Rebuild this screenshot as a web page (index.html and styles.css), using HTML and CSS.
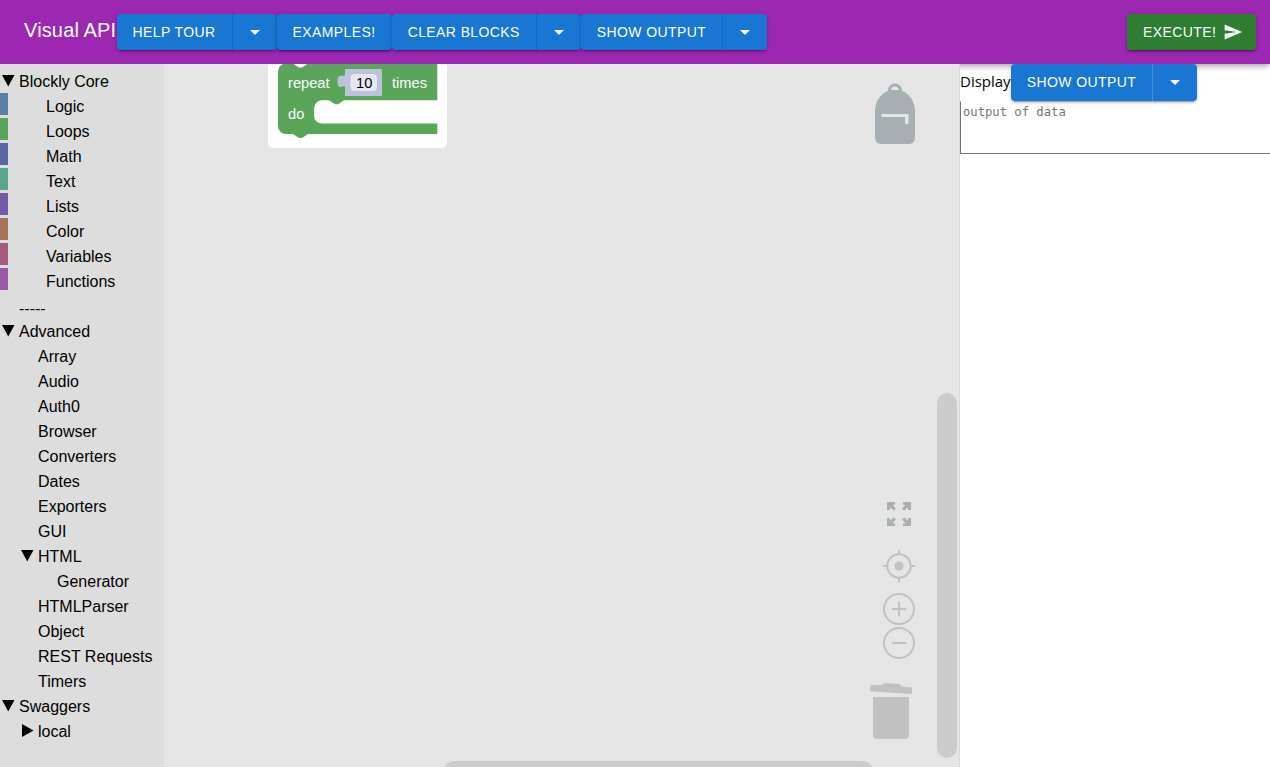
FILE: index.html
```html
<!DOCTYPE html>
<html lang="en">
<head>
<meta charset="utf-8">
<title>Visual API</title>
<link rel="stylesheet" href="styles.css">
</head>
<body>
<header class="appbar">
  <h1 class="brand">Visual API</h1>
  <div class="group"><button class="btn help">HELP TOUR</button><button class="btn drop" aria-label="More"><svg class="caret" viewBox="0 0 24 24"><path d="m7 10 5 5 5-5z"/></svg></button></div>
  <button class="btn examples">EXAMPLES!</button>
  <div class="group"><button class="btn clear">CLEAR BLOCKS</button><button class="btn drop" aria-label="More"><svg class="caret" viewBox="0 0 24 24"><path d="m7 10 5 5 5-5z"/></svg></button></div>
  <div class="group"><button class="btn show">SHOW OUTPUT</button><button class="btn drop" aria-label="More"><svg class="caret" viewBox="0 0 24 24"><path d="m7 10 5 5 5-5z"/></svg></button></div>
  <button class="btn execute">EXECUTE!<svg class="send" viewBox="0 0 24 24"><path d="M2.01 21 23 12 2.01 3 2 10l15 2-15 2z"/></svg></button>
</header>
<main class="main">
  <nav class="toolbox">
    <div class="row"><i class="arrow down"></i>Blockly Core</div>
    <div class="row core logic">Logic</div>
    <div class="row core loops">Loops</div>
    <div class="row core math">Math</div>
    <div class="row core text">Text</div>
    <div class="row core lists">Lists</div>
    <div class="row core color">Color</div>
    <div class="row core variables">Variables</div>
    <div class="row core functions">Functions</div>
    <div class="row divider">-----</div>
    <div class="row"><i class="arrow down"></i>Advanced</div>
    <div class="row sub">Array</div>
    <div class="row sub">Audio</div>
    <div class="row sub">Auth0</div>
    <div class="row sub">Browser</div>
    <div class="row sub">Converters</div>
    <div class="row sub">Dates</div>
    <div class="row sub">Exporters</div>
    <div class="row sub">GUI</div>
    <div class="row sub"><i class="arrow down"></i>HTML</div>
    <div class="row leaf">Generator</div>
    <div class="row sub">HTMLParser</div>
    <div class="row sub">Object</div>
    <div class="row sub">REST Requests</div>
    <div class="row sub">Timers</div>
    <div class="row"><i class="arrow down"></i>Swaggers</div>
    <div class="row sub"><i class="arrow right"></i>local</div>
  </nav>
  <svg class="workspace" viewBox="164 64 796 703">
    <!-- loop block -->
    <rect class="paper" x="268" y="40" width="179" height="108" rx="5"/>
    <path class="loop" d="M278 71.5a8 8 0 0 1 8-8h7l6 4h3l6-4h129.3v36.8H344l-6 4h-3l-6-4h-7a8 8 0 0 0-8 8v7.2a8 8 0 0 0 8 8h115.3V134H308l-6 4h-3l-6-4h-7a8 8 0 0 1-8-8z"/>
    <path class="number" d="M345 69h37v27h-37v-8c0-5-7.500 4-7.500-6.500s7.500-2.500 7.500-7.500z"/>
    <rect class="field" x="350.500" y="74" width="26.500" height="17" rx="4"/>
    <text class="label" x="288" y="88">repeat</text>
    <text class="label value" x="356" y="88">10</text>
    <text class="label" x="392" y="88">times</text>
    <text class="label" x="288" y="119">do</text>
    <!-- backpack -->
    <g class="slate">
      <path d="M875 111c0-11 8-20 16-21h8c8 1 16 10 16 21v27a6 6 0 0 1-6 6h-28a6 6 0 0 1-6-6z"/>
      <path class="handle" d="M889.500 92v-1.500a5.500 5.500 0 0 1 11 0V92"/>
      <path class="zipper" d="M881.500 114h27v9a1 1 0 0 1-1 1h-1.500a1 1 0 0 1-1-1v-6h-23.500z"/>
    </g>
    <!-- zoom to fit -->
    <g class="slate">
      <path d="M887 502h8v2.500l-2.500.5 3.500 3.500-2.200 2.200-3.600-3.500-.4 2.800H887z"/>
      <path d="M911 502h-8v2.500l2.500.5-3.500 3.500 2.200 2.200 3.600-3.500.4 2.800h2.800z"/>
      <path d="M887 526h8v-2.500l-2.500-.5 3.500-3.500-2.200-2.200-3.600 3.500-.4-2.800H887z"/>
      <path d="M911 526h-8v-2.500l2.500-.5-3.500-3.500 2.200-2.200 3.600 3.500.4-2.800h2.800z"/>
    </g>
    <!-- centre and zoom controls -->
    <g class="outline">
      <circle cx="899" cy="566" r="11.700"/>
      <path d="M899 550v4m0 24v4M883 566h4m24 0h4"/>
      <circle cx="899" cy="609" r="15"/>
      <path d="M891.800 609h14.400M899 601.800v14.400"/>
      <circle cx="899" cy="643" r="15"/>
      <path d="M891.800 643h14.400"/>
    </g>
    <circle class="grey" cx="899" cy="566" r="4.500"/>
    <!-- trash can -->
    <path class="grey" d="M873 697h36v38a4 4 0 0 1-4 4h-28a4 4 0 0 1-4-4zM870.500 684.800l11.200.5 2.700-2.400 15.200 1 1.900 2.700 10.800.8-.5 6.600-41.800-2.800z"/>
    <rect class="scroll" x="937" y="393" width="20" height="365" rx="10"/>
    <rect class="scroll" x="444" y="761" width="429" height="20" rx="10"/>
    <path class="edge" d="M959.500 64v703"/>
  </svg>
  <aside class="output">
    <div class="display">
      <span class="caption">Display</span>
      <div class="group"><button class="btn show">SHOW OUTPUT</button><button class="btn drop" aria-label="More"><svg class="caret" viewBox="0 0 24 24"><path d="m7 10 5 5 5-5z"/></svg></button></div>
    </div>
    <textarea class="data" placeholder="output of data"></textarea>
  </aside>
</main>
</body>
</html>
```
FILE: styles.css
```css
* { box-sizing: border-box; }
body {
  margin: 0;
  height: 767px;
  overflow: hidden;
  background: #fff;
  color: #000;
  font-family: "Liberation Sans", Arial, sans-serif;
}
.appbar {
  position: relative;
  z-index: 1;
  display: flex;
  align-items: center;
  height: 64px;
  padding: 0 14px 0 24px;
  background: #9c27b0;
  box-shadow: 0 2px 4px -1px #0003, 0 4px 5px #0002, 0 1px 10px #0001;
}
.brand {
  width: 92.5px;
  margin: 0;
  padding-bottom: 4px;
  color: #fff;
  font-size: 20px;
  font-weight: 400;
  letter-spacing: 0.15px;
  line-height: 32px;
  white-space: nowrap;
}
.group {
  display: flex;
  border-radius: 4px;
  box-shadow: 0 3px 1px -2px #0003, 0 2px 2px #0002, 0 1px 5px #0002;
}
.btn {
  display: flex;
  align-items: center;
  justify-content: center;
  height: 36.5px;
  padding: 0 0 1px;
  border: 0;
  border-radius: 4px;
  background: #1976d2;
  color: #fff;
  font: 14px "Liberation Sans", Arial, sans-serif;
  letter-spacing: 0.4px;
  white-space: nowrap;
}
.group .btn:first-child {
  border-right: 1px solid #1565c0;
  border-radius: 4px 0 0 4px;
}
.group .drop {
  width: 44px;
  padding: 0;
  border-radius: 0 4px 4px 0;
}
.help { width: 116px; }
.examples {
  width: 115px;
  margin: 0;
  box-shadow: 0 3px 1px -2px #0005, 0 2px 2px #0003, 0 1px 5px #0003;
}
.clear { width: 145.5px; }
.show { width: 142px; }
.execute {
  width: 129px;
  margin: 0 0 0 auto;
  padding-left: 16px;
  gap: 7px;
  justify-content: flex-start;
  background: #2e7d32;
  box-shadow: 0 3px 1px -2px #0003, 0 2px 2px #0003, 0 1px 5px #0002;
}
.caret { width: 24px; flex: none; fill: #fff; }
.send { width: 20px; flex: none; fill: #fff; }
.main { display: flex; height: 703px; }
.toolbox {
  position: relative;
  z-index: 2;
  width: 164px;
  flex: none;
  padding-top: 4px;
  background: #ddd;
}
.row {
  display: flex;
  height: 25px;
  padding-left: 19px;
  font-size: 16px;
  line-height: 28px;
  white-space: nowrap;
}
.divider { line-height: 31px; }
.arrow {
  width: 17px;
  margin-left: -17px;
  flex: none;
}
.arrow::before {
  content: "";
  display: block;
  width: 12.5px;
  height: 11.5px;
  margin-top: 7px;
  background: #000;
}
.down::before { clip-path: polygon(0 0, 100% 0, 50% 100%); }
.right { margin-left: -16px; width: 16px; }
.right::before { width: 11.5px; height: 13px; margin-top: 6px; clip-path: polygon(0 0, 100% 50%, 0 100%); }
.sub { padding-left: 38px; }
.leaf { padding-left: 57px; }
.core {
  height: 22px;
  margin-bottom: 3px;
  padding-left: 38px;
  border-left: 8px solid;
}
.row.core { color: #000; }
.logic { border-left-color: #5b80a5; }
.loops { border-left-color: #5ba55b; }
.math { border-left-color: #5b67a5; }
.text { border-left-color: #5ba58c; }
.lists { border-left-color: #745ba5; }
.color { border-left-color: #a5745b; }
.variables { border-left-color: #a55b80; }
.functions { border-left-color: #995ba5; }
.workspace {
  position: relative;
  z-index: 2;
  display: block;
  width: 796px;
  height: 703px;
  flex: none;
  background: #e5e5e5;
}
.paper { fill: #fff; }
.loop { fill: #5ba55b; }
.number { fill: #bdc2db; }
.field { fill: #e5e7f1; }
.label { fill: #fff; font-size: 14.67px; }
.value { fill: #000; }
.slate { fill: #a7afb2; }
.handle { fill: none; stroke: #a7afb2; stroke-width: 3; }
.zipper { fill: #e5e5e5; }
.outline { fill: none; stroke: #c1c1c1; stroke-width: 2; }
.grey { fill: #c1c1c1; }
.scroll { fill: #ccc; }
.edge { stroke: #d9d9d9; }
.output { width: 310px; flex: none; overflow: hidden; }
.display { display: flex; align-items: flex-start; height: 37px; }
.display .group {
  position: relative;
  z-index: 2;
}
.caption {
  width: 51px;
  font: 15px/35px "Open Sans", "Noto Sans", sans-serif;
  white-space: nowrap;
}
.output .group .btn:first-child { border-right-color: #478fda; }
.data {
  display: block;
  width: 330px;
  height: 53px;
  padding: 2px;
  border: 1px solid #767676;
  border-top-color: transparent;
  font: 12.2px/17px "DejaVu Sans Mono", monospace;
  resize: none;
}
.data::placeholder { color: #757575; }
```
